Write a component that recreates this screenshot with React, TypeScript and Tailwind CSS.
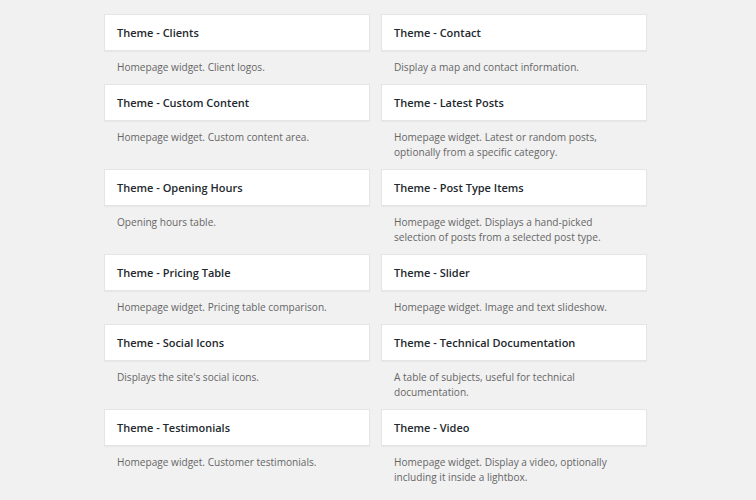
import React from "react";

type Widget = { title: string; description: string };

const widgets: Widget[] = [
  { title: "Theme - Clients", description: "Homepage widget. Client logos." },
  { title: "Theme - Contact", description: "Display a map and contact information." },
  { title: "Theme - Custom Content", description: "Homepage widget. Custom content area." },
  { title: "Theme - Latest Posts", description: "Homepage widget. Latest or random posts, optionally from a specific category." },
  { title: "Theme - Opening Hours", description: "Opening hours table." },
  { title: "Theme - Post Type Items", description: "Homepage widget. Displays a hand-picked selection of posts from a selected post type." },
  { title: "Theme - Pricing Table", description: "Homepage widget. Pricing table comparison." },
  { title: "Theme - Slider", description: "Homepage widget. Image and text slideshow." },
  { title: "Theme - Social Icons", description: "Displays the site's social icons." },
  { title: "Theme - Technical Documentation", description: "A table of subjects, useful for technical documentation." },
  { title: "Theme - Testimonials", description: "Homepage widget. Customer testimonials." },
  { title: "Theme - Video", description: "Homepage widget. Display a video, optionally including it inside a lightbox." },
];

const App: React.FC = () => {
  return (
    <div className="min-h-[500px] w-[756px] overflow-hidden bg-[#f1f1f1] font-['Open_Sans',sans-serif]">
      <div className="ml-[104px] grid grid-cols-[266px_266px] gap-x-[11px] pt-[14px]">
        {widgets.map((w) => (
          <div key={w.title}>
            <div className="flex h-[37px] items-center border border-[#e5e5e5] bg-white px-[12px] pt-[2px] shadow-[0_1px_1px_rgba(0,0,0,0.04)]">
              <h3 className="text-[11px] font-semibold text-[#23282d]">{w.title}</h3>
            </div>
            <p className="pt-[9px] pb-[9px] pl-[13px] pr-[30px] text-[10.1px] leading-[15px] text-[#666]">
              {w.description}
            </p>
          </div>
        ))}
      </div>
    </div>
  );
};

export default App;
